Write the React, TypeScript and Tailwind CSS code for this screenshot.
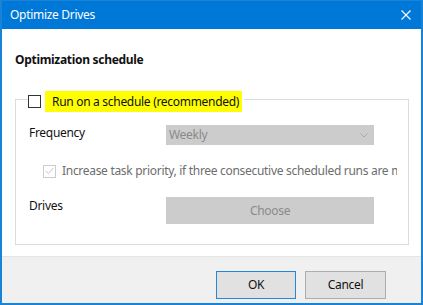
import React from "react";

export default function App() {
  return (
    <div
      className="w-[423px] h-[305px] flex flex-col bg-[#1883d7] pt-[1px] px-[2px] pb-[2px] overflow-hidden tracking-[-0.3px]"
      style={{ fontFamily: '"Noto Sans", "Segoe UI", sans-serif' }}
    >
      {/* Title bar */}
      <div className="h-[28px] bg-[#0078d7] flex items-center justify-between pl-[8px] pr-[10px] shrink-0">
        <span className="text-white text-[12px] leading-[16px]">Optimize Drives</span>
        <svg width="10" height="10" viewBox="0 0 10 10">
          <path d="M0.5 0.5 L9.5 9.5 M9.5 0.5 L0.5 9.5" stroke="white" strokeWidth="1.1" />
        </svg>
      </div>

      {/* Body */}
      <div className="bg-white flex-1 flex flex-col">
        <div className="px-[13px] pt-[23px]">
          <div className="text-[12px] leading-[16px] font-bold text-[#111]">Optimization schedule</div>

          {/* Group box */}
          <div className="relative mt-[31px] w-[394px] h-[146px] border border-[#dcdcdc] pl-[13px]">
            {/* Legend checkbox over the border */}
            <div className="absolute left-[12px] top-[-9px] flex items-center bg-white pr-[2px]">
              <div className="w-[13px] h-[13px] border border-[#333333] bg-white" />
              <div className="ml-[4px] h-[21px] w-[197px] bg-[#ffff00] flex items-center pl-[7px]">
                <span className="text-[12px] leading-[16px] text-[#111] whitespace-nowrap">
                  Run on a schedule (recommended)
                </span>
              </div>
            </div>

            {/* Frequency row */}
            <div className="flex items-start mt-[25px]">
              <div className="w-[137px] text-[12px] leading-[16px] text-[#111]">Frequency</div>
              <div className="w-[208px] h-[20px] bg-[#cccccc] flex items-center justify-between pl-[3px] pr-[6px]">
                <span className="text-[12px] leading-[16px] text-[#8a8a8a]">Weekly</span>
                <svg width="8" height="5" viewBox="0 0 8 5">
                  <path d="M0.5 0.5 L4 4 L7.5 0.5" stroke="#a8a8a8" strokeWidth="1" fill="none" />
                </svg>
              </div>
            </div>

            {/* Increase priority row */}
            <div className="flex items-center mt-[20px] ml-[14px] h-[12px]">
              <div className="w-[13px] h-[13px] border border-[#cccccc] bg-white flex items-center justify-center shrink-0">
                <svg width="9" height="8" viewBox="0 0 9 8">
                  <path d="M0.8 4 L3.3 6.5 L8.3 1" stroke="#c4c4c4" strokeWidth="1" fill="none" />
                </svg>
              </div>
              <div className="ml-[6px] w-[335px] overflow-hidden whitespace-nowrap text-[12px] leading-[16px] text-[#6d6d6d]">
                Increase task priority, if three consecutive scheduled runs are missed
              </div>
            </div>

            {/* Drives row */}
            <div className="flex items-start mt-[20px]">
              <div className="w-[137px] text-[12px] leading-[16px] text-[#111] mt-[1px]">Drives</div>
              <div className="w-[208px] h-[27px] bg-[#cccccc] flex items-center justify-center">
                <span className="text-[12px] leading-[16px] text-[#8a8a8a]">Choose</span>
              </div>
            </div>
          </div>
        </div>
      </div>

      {/* Footer */}
      <div className="h-[47px] shrink-0 bg-[#f0f0f0] border-t border-[#e5e5e5] flex justify-end items-start pt-[14px] pr-[35px] gap-[9px]">
        <button className="w-[80px] h-[28px] bg-[#e1e1e1] border border-[#2686dd] text-[12px] leading-[16px] text-[#111]">
          OK
        </button>
        <button className="w-[81px] h-[28px] bg-[#e1e1e1] border border-[#adadad] text-[12px] leading-[16px] text-[#111]">
          Cancel
        </button>
      </div>
    </div>
  );
}
